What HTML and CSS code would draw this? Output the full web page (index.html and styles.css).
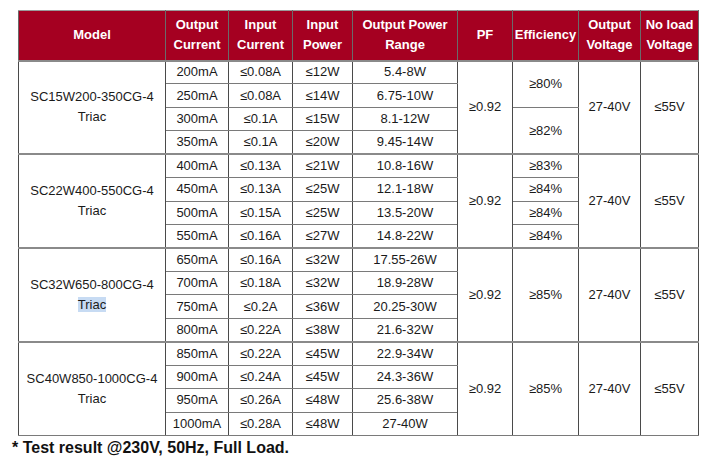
FILE: index.html
```html
<!DOCTYPE html>
<html>
<head>
<meta charset="utf-8">
<link rel="stylesheet" href="styles.css">
</head>
<body>
<table class="spec">
  <colgroup>
    <col class="c-model"><col class="c-oc"><col class="c-ic"><col class="c-ip"><col class="c-opr"><col class="c-pf"><col class="c-eff"><col class="c-ov"><col class="c-nl">
  </colgroup>
  <thead>
    <tr>
      <th>Model</th>
      <th>Output<br>Current</th>
      <th>Input<br>Current</th>
      <th>Input<br>Power</th>
      <th>Output Power<br>Range</th>
      <th>PF</th>
      <th>Efficiency</th>
      <th>Output<br>Voltage</th>
      <th>No load<br>Voltage</th>
    </tr>
  </thead>
  <tbody class="group">
    <tr>
      <td rowspan="4" class="model">SC15W200-350CG-4<br>Triac</td>
      <td>200mA</td><td>≤0.08A</td><td>≤12W</td><td>5.4-8W</td>
      <td rowspan="4">≥0.92</td>
      <td rowspan="2">≥80%</td>
      <td rowspan="4">27-40V</td>
      <td rowspan="4">≤55V</td>
    </tr>
    <tr><td>250mA</td><td>≤0.08A</td><td>≤14W</td><td>6.75-10W</td></tr>
    <tr><td>300mA</td><td>≤0.1A</td><td>≤15W</td><td>8.1-12W</td><td rowspan="2">≥82%</td></tr>
    <tr><td>350mA</td><td>≤0.1A</td><td>≤20W</td><td>9.45-14W</td></tr>
  </tbody>
  <tbody class="group">
    <tr>
      <td rowspan="4" class="model">SC22W400-550CG-4<br>Triac</td>
      <td>400mA</td><td>≤0.13A</td><td>≤21W</td><td>10.8-16W</td>
      <td rowspan="4">≥0.92</td>
      <td>≥83%</td>
      <td rowspan="4">27-40V</td>
      <td rowspan="4">≤55V</td>
    </tr>
    <tr><td>450mA</td><td>≤0.13A</td><td>≤25W</td><td>12.1-18W</td><td>≥84%</td></tr>
    <tr><td>500mA</td><td>≤0.15A</td><td>≤25W</td><td>13.5-20W</td><td>≥84%</td></tr>
    <tr><td>550mA</td><td>≤0.16A</td><td>≤27W</td><td>14.8-22W</td><td>≥84%</td></tr>
  </tbody>
  <tbody class="group">
    <tr>
      <td rowspan="4" class="model">SC32W650-800CG-4<br><span class="sel">Triac</span></td>
      <td>650mA</td><td>≤0.16A</td><td>≤32W</td><td>17.55-26W</td>
      <td rowspan="4">≥0.92</td>
      <td rowspan="4">≥85%</td>
      <td rowspan="4">27-40V</td>
      <td rowspan="4">≤55V</td>
    </tr>
    <tr><td>700mA</td><td>≤0.18A</td><td>≤32W</td><td>18.9-28W</td></tr>
    <tr><td>750mA</td><td>≤0.2A</td><td>≤36W</td><td>20.25-30W</td></tr>
    <tr><td>800mA</td><td>≤0.22A</td><td>≤38W</td><td>21.6-32W</td></tr>
  </tbody>
  <tbody class="group">
    <tr>
      <td rowspan="4" class="model">SC40W850-1000CG-4<br>Triac</td>
      <td>850mA</td><td>≤0.22A</td><td>≤45W</td><td>22.9-34W</td>
      <td rowspan="4">≥0.92</td>
      <td rowspan="4">≥85%</td>
      <td rowspan="4">27-40V</td>
      <td rowspan="4">≤55V</td>
    </tr>
    <tr><td>900mA</td><td>≤0.24A</td><td>≤45W</td><td>24.3-36W</td></tr>
    <tr><td>950mA</td><td>≤0.26A</td><td>≤48W</td><td>25.6-38W</td></tr>
    <tr><td>1000mA</td><td>≤0.28A</td><td>≤48W</td><td>27-40W</td></tr>
  </tbody>
</table>
<p class="note">* Test result @230V, 50Hz, Full Load.</p>
</body>
</html>
```

FILE: styles.css
```css
html, body {
  margin: 0;
  padding: 0;
  background: #ffffff;
}
body {
  font-family: "Liberation Sans", Arial, sans-serif;
  color: #1a1a1a;
}
.spec {
  margin: 10px 0 0 18px;
  border-collapse: collapse;
  table-layout: fixed;
  width: 680px;
  font-size: 13px;
}
.c-model { width: 147px; }
.c-oc { width: 63px; }
.c-ic { width: 64px; }
.c-ip { width: 60px; }
.c-opr { width: 105px; }
.c-pf { width: 55px; }
.c-eff { width: 66px; }
.c-ov { width: 62px; }
.c-nl { width: 58px; }

.spec thead tr {
  height: 50px;
}
.spec th {
  background: #a50021;
  color: #ffffff;
  font-weight: bold;
  line-height: 20px;
  padding: 0;
  text-align: center;
  vertical-align: middle;
  border: 1px solid #6a6a6a;
  border-top-color: #9a9a9a;
}
.spec tbody tr {
  height: 23.45px;
}
.spec td {
  padding: 0;
  text-align: center;
  vertical-align: middle;
  line-height: 16px;
  border-left: 1px solid #4a4a4a;
  border-right: 1px solid #4a4a4a;
  border-top: 1px solid #7a7a7a;
  border-bottom: 1px solid #7a7a7a;
}
.group tr:first-child td {
  border-top: 2px solid #8a8a8a;
}
.spec td.model {
  line-height: 20px;
}
.sel {
  background: #c7dbf3;
}
.note {
  margin: 3px 0 0 12px;
  font-size: 16px;
  font-weight: bold;
  line-height: 18px;
  color: #111111;
}
```
